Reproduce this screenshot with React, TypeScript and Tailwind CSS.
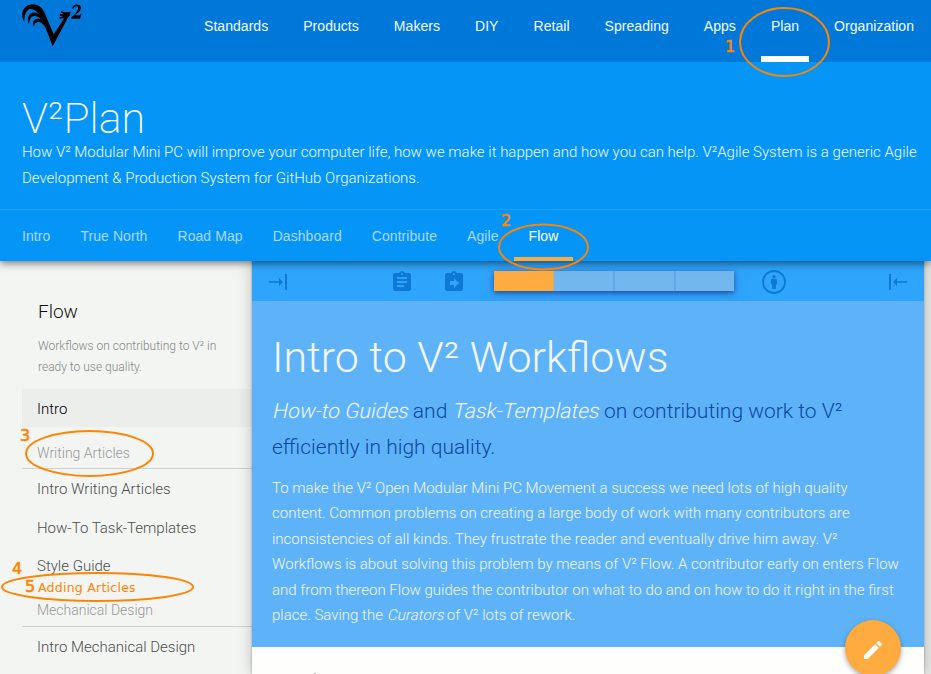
import { ReactNode } from "react";

const topLinks = ["Standards", "Products", "Makers", "DIY", "Retail", "Spreading", "Apps", "Plan", "Organization"];
const subLinks = ["Intro", "True North", "Road Map", "Dashboard", "Contribute", "Agile", "Flow"];

function Logo() {
  return (
    <svg className="h-[50px] w-[75px]" viewBox="0 0 225 150" fill="#000" aria-label="V2 logo">
      <path d="M28 65C19 52 19 32 31 21C45 8 68 11 80 24C86 31 90 41 94 51L116 103L148 54L134 57L133 52L145 49L134 47L135 42L147 43L137 37L139 33L150 37L165 35L168 38L163 42L166 46L158 53L152 66L113 139L88 74C82 52 62 22 42 28C31 33 28 50 28 65Z" />
      <path d="M42 73C36 58 39 44 50 39C64 34 80 45 86 60L86 68C78 54 64 45 54 49C45 53 43 62 42 73Z" />
      <path d="M57 80C51 68 55 59 65 57C77 55 84 61 89 72L90 80C82 70 76 65 68 66C60 68 58 74 57 80Z" />
      <path d="M172 27C172 18 179 13 188 14C198 15 201 22 196 30C192 37 184 42 179 46H190Q195 46 198 41H200L195 56H168V53C176 46 187 36 189 26C190 18 181 17 178 22Q175 27 172 27Z" />
    </svg>
  );
}

function Icon({ children, className }: { children: ReactNode; className: string }) {
  return (
    <svg viewBox="0 0 24 24" fill="currentColor" className={className}>
      {children}
    </svg>
  );
}

function Slanted({ children, className = "" }: { children: ReactNode; className?: string }) {
  return <em className={`inline-block -skew-x-12 not-italic ${className}`}>{children}</em>;
}

function Mark({ n, className }: { n: string; className: string }) {
  return (
    <span className={`absolute font-['DejaVu_Sans',sans-serif] text-[16px] leading-[16px] text-[#ff8400] [-webkit-text-stroke:0.6px_#ff8400] ${className}`}>
      {n}
    </span>
  );
}

function SideSection({ title, className }: { title: string; className: string }) {
  return (
    <div className={`ml-[22px] border-b border-[#cfd1cf] pl-[15px] text-[14px] leading-5 font-light text-[#979897] ${className}`}>
      {title}
    </div>
  );
}

export default function App() {
  return (
    <div className="relative flex h-[674px] w-[931px] flex-col overflow-hidden bg-[#f3f5f3] font-[Roboto,sans-serif]">
      <header className="relative z-20 flex h-[261px] shrink-0 flex-col bg-[#0595f7] shadow-[0_2px_8px_rgba(0,0,0,0.55)]">
        <div className="flex h-[62px] bg-[#0078d9]">
          <div className="w-[189px] shrink-0 pl-[15px]">
            <Logo />
          </div>
          <nav className="flex gap-[35px] pl-[15px] font-['Liberation_Sans',sans-serif] text-[14px] leading-5 tracking-[0.045px] text-[#f4faff]">
            {topLinks.map((l) => (
              <a key={l} className="flex flex-col items-center justify-between whitespace-nowrap pt-4">
                {l}
                {l === "Plan" && <span className="-mx-3 h-[6px] w-12 bg-white" />}
              </a>
            ))}
          </nav>
        </div>
        <div className="h-[147px] pl-[22px] pt-[33px] text-[#f0f9ff]">
          <h1 className="text-[43px] leading-[46px] font-extralight text-white">V²Plan</h1>
          <p className="-mt-[2px] text-[15px] leading-[26px] font-light whitespace-nowrap">
            How V² Modular Mini PC will improve your computer life, how we make it happen and how you can help. V²Agile System is a generic Agile
            <br />
            Development &amp; Production System for GitHub Organizations.
          </p>
        </div>
        <nav className="flex h-[52px] gap-[30px] border-t border-[#1c9df7] pl-[22px] font-['Liberation_Sans',sans-serif] text-[14px] leading-5 tracking-[0.07px] text-[#abd9fb]">
          {subLinks.map((l) => (
            <a key={l} className={`flex flex-col items-center justify-between whitespace-nowrap pt-4 ${l === "Flow" ? "text-white" : ""}`}>
              {l}
              {l === "Flow" && <span className="-mx-4 h-1 w-[59px] bg-[#ffab40]" />}
            </a>
          ))}
        </nav>
      </header>

      <div className="flex min-h-0 flex-1">
        <aside className="flex w-[252px] shrink-0 flex-col text-[15px] font-light text-[#4c4d4c]">
          <h2 className="mt-[39px] pl-[38px] text-[19px] leading-6 font-light text-[#111]">Flow</h2>
          <p className="mt-[12px] pl-[38px] text-[12px] leading-[21px] font-light whitespace-nowrap text-[#858785]">
            Workflows on contributing to V² in
            <br />
            ready to use quality.
          </p>
          <div className="mt-[11px] ml-[22px] h-[38px] bg-[#eceeec] pl-[15px] leading-[40px] text-[#000]">Intro</div>
          <SideSection title="Writing Articles" className="h-[42px] pt-[16px]" />
          <a className="pl-[37px] leading-10">Intro Writing Articles</a>
          <a className="pl-[37px] leading-[38px]">How-To Task-Templates</a>
          <a className="pl-[37px] leading-[38px]">Style Guide</a>
          <SideSection title="Mechanical Design" className="h-[42px] pt-[15px]" />
          <a className="pl-[37px] leading-10">Intro Mechanical Design</a>
        </aside>

        <main className="z-10 flex w-[672px] shrink-0 flex-col bg-[#fefefc] shadow-[0_0_2px_rgba(0,0,0,0.35),0_0_14px_rgba(0,0,0,0.22)]">
          <div className="relative flex h-10 shrink-0 items-center bg-[#2ea5fa] pt-[2px] text-[#0d79d4]">
            <svg viewBox="0 0 18 16" className="ml-[17px] h-4 w-[18px]">
              <path d="M0 8h11" stroke="currentColor" strokeWidth="1.5" />
              <path d="M10 4l4 4-4 4z" fill="currentColor" />
              <path d="M17 0v16" stroke="currentColor" strokeWidth="2" />
            </svg>
            <Icon className="ml-[103px] h-6 w-6">
              <path d="M19 3h-4.18C14.4 1.84 13.3 1 12 1s-2.4.84-2.82 2H5c-1.1 0-2 .9-2 2v14c0 1.1.9 2 2 2h14c1.1 0 2-.9 2-2V5c0-1.1-.9-2-2-2zm-7 0c.55 0 1 .45 1 1s-.45 1-1 1-1-.45-1-1 .45-1 1-1zm2 14H7v-2h7v2zm3-4H7v-2h10v2zm0-4H7V7h10v2z" />
            </Icon>
            <Icon className="ml-[28px] h-6 w-6">
              <path d="M19 3h-4.18C14.4 1.84 13.3 1 12 1s-2.4.84-2.82 2H5c-1.1 0-2 .9-2 2v14c0 1.1.9 2 2 2h14c1.1 0 2-.9 2-2V5c0-1.1-.9-2-2-2zm-7 0c.55 0 1 .45 1 1s-.45 1-1 1-1-.45-1-1 .45-1 1-1zm0 15v-3H8v-4h4V8l5 5-5 5z" />
            </Icon>
            <div className="-mt-[2px] ml-[28px] flex h-5 w-[240px] bg-[#72b7ed] shadow-[0_2px_5px_rgba(0,40,100,0.6),0_2px_12px_rgba(80,120,240,0.6)]">
              <span className="w-[60px] border-r border-[#d4ad75] bg-[#ffab40]" />
              <span className="w-[61px] border-r-2 border-[#62a9e5]" />
              <span className="w-[61px] border-r-2 border-[#62a9e5]" />
            </div>
            <Icon className="ml-[28px] h-6 w-6">
              <circle cx="12" cy="12" r="11" fill="none" stroke="currentColor" strokeWidth="1.8" />
              <circle cx="12" cy="6.4" r="1.7" />
              <path d="M9.8 8.8h4.4l.8.8v4.7h-1.2V19h-3.6v-4.7H9V9.600z" />
            </Icon>
            <svg viewBox="0 0 18 16" className="ml-[103px] h-4 w-[18px]">
              <path d="M7 8h11" stroke="currentColor" strokeWidth="1.5" />
              <path d="M8 4L4 8l4 4z" fill="currentColor" />
              <path d="M1 0v16" stroke="currentColor" strokeWidth="2" />
            </svg>
          </div>
          <section className="h-[346px] shrink-0 bg-[#5eb3f8] pl-[20px] whitespace-nowrap text-[#f4f5f6]">
            <h2 className="pt-[31px] text-[42.9px] leading-[50px] font-light">Intro to V² Workflows</h2>
            <p className="pt-[11px] text-[21px] leading-[36px] font-light text-[#0c47a1]">
              <Slanted className="translate-x-[1.500px] text-[#f4f5f6]">How-to Guides</Slanted> and{" "}
              <Slanted className="translate-x-[1.500px] text-[#f4f5f6]">Task-Templates</Slanted> on contributing work to V²
              <br />
              efficiently in high quality.
            </p>
            <p className="pt-[11px] text-[15px] leading-[25.4px] font-light">
              To make the V² Open Modular Mini PC Movement a success we need lots of high quality
              <br />
              content. Common problems on creating a large body of work with many contributors are
              <br />
              inconsistencies of all kinds. They frustrate the reader and eventually drive him away. V²
              <br />
              Workflows is about solving this problem by means of V² Flow. A contributor early on enters Flow
              <br />
              and from thereon Flow guides the contributor on what to do and on how to do it right in the first
              <br />
              place. Saving the <Slanted className="translate-x-px">Curators</Slanted> of V² lots of rework.
            </p>
          </section>
          <div className="mt-[26px] ml-[62px] h-px w-[2px] bg-[#aaa]" />
        </main>
        <div className="flex-1 bg-[#e7e9e7]" />
      </div>

      <button className="absolute top-[620px] left-[845px] z-30 flex h-14 w-14 items-center justify-center rounded-full bg-[#ffab40] text-white shadow-[0_2px_5px_rgba(0,0,0,0.35)]">
        <Icon className="mt-[3px] h-6 w-6">
          <path d="M3 17.25V21h3.750L17.810 9.940l-3.750-3.750L3 17.250zM20.710 7.040a1 1 0 0 0 0-1.410l-2.340-2.340a1 1 0 0 0-1.410 0l-1.830 1.830 3.750 3.750 1.830-1.830z" />
        </Icon>
      </button>

      <div className="pointer-events-none absolute inset-0 z-40">
        <svg className="absolute inset-0 h-full w-full" viewBox="0 0 931 674" fill="none" stroke="#ff8400" strokeWidth="2">
          <ellipse cx="784.500" cy="42" rx="44.500" ry="34" />
          <ellipse cx="543.500" cy="247" rx="44.500" ry="22.500" />
          <ellipse cx="89.500" cy="453.500" rx="63.500" ry="22.500" />
          <ellipse cx="97.500" cy="587" rx="95.500" ry="14" />
        </svg>
        <Mark n="1" className="top-[39px] left-[725px]" />
        <Mark n="2" className="top-[213px] left-[501px]" />
        <Mark n="3" className="top-[428px] left-[20px]" />
        <Mark n="4" className="top-[561px] left-[12px]" />
        <Mark n="5" className="top-[579px] left-[25px]" />
        <span className="absolute top-[580px] left-[38px] font-['DejaVu_Sans',sans-serif] text-[12.500px] leading-4 tracking-[0.25px] whitespace-nowrap text-[#ff8400]">
          Adding Articles
        </span>
      </div>
    </div>
  );
}
